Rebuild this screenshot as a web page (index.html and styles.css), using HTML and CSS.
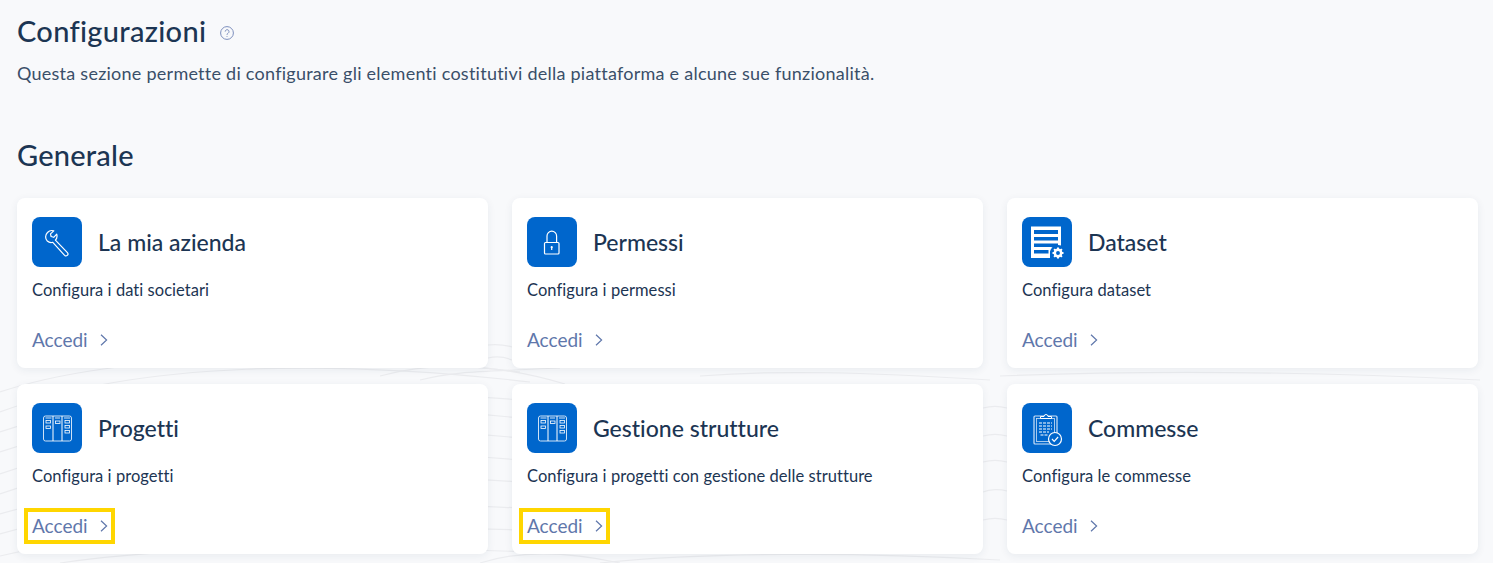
FILE: index.html
```html
<!DOCTYPE html>
<html lang="it">
<head>
  <meta charset="UTF-8" />
  <title>Configurazioni</title>
  <link rel="stylesheet" href="styles.css">
</head>
<body>
  <svg class="sfondo" width="1493" height="563" viewBox="0 0 1493 563" fill="none" aria-hidden="true">
    <g stroke="#ebecef" stroke-width="1.2">
      <path d="M0 392 C120 352 330 350 520 372" />
      <path d="M0 412 C140 360 340 360 530 382" />
      <path d="M0 432 C150 380 340 385 520 400" />
      <path d="M0 452 C150 400 340 400 520 418" />
      <path d="M0 474 C150 420 340 420 520 438" />
      <path d="M0 494 C150 440 340 445 520 460" />
      <path d="M0 514 C150 470 340 470 520 482" />
      <path d="M0 534 C150 490 340 500 520 508" />
      <path d="M0 556 C150 520 340 525 520 530" />
      <path d="M60 563 C180 545 350 545 530 552" />
      <path d="M380 376 C430 362 490 362 565 384" />
      <path d="M420 380 C450 372 470 372 560 368" />
      <path d="M488 345 C496 344 505 345 512 347" />
      <path d="M488 358 C496 356 505 357 512 360" />
      <path d="M480 563 C520 550 570 552 620 563" />
      <path d="M983 408 C990 406 1000 406 1007 408" />
      <path d="M983 436 C990 434 1000 434 1007 436" />
      <path d="M983 462 C990 460 1000 460 1007 462" />
      <path d="M983 492 C990 489 1000 489 1007 491" />
      <path d="M983 520 C990 518 1000 518 1007 520" />
      <path d="M700 376 C780 370 860 372 990 380" />
      <path d="M1000 376 C1150 370 1320 372 1480 380" />
      <path d="M600 563 C700 552 860 552 1000 560" />
    </g>
  </svg>

  <main class="pagina">
    <header class="intestazione">
      <h1>Configurazioni
        <svg class="aiuto" width="14" height="14" viewBox="0 0 14 14" fill="none" stroke="#7d8fbd">
          <circle cx="7" cy="7" r="6.4" />
          <path d="M5.2 5.6a1.900 1.900 0 1 1 2.900 1.600c-.7.4-1.100.8-1.100 1.600" />
          <path d="M7 10v.8" />
        </svg>
      </h1>
      <p>Questa sezione permette di configurare gli elementi costitutivi della piattaforma e alcune sue funzionalità.</p>
    </header>

    <h2>Generale</h2>

    <section class="griglia">
      <article class="card">
        <div class="card-top">
          <span class="icona">
            <svg width="50" height="50" viewBox="0 0 50 50" fill="none" stroke="#fff" stroke-width="1.2" stroke-linejoin="round">
              <path d="M15.500 15.500c1.600-1.700 4-2.400 6.300-1.600l-3.300 3 .6 2.600 2.600.8 3-3.200c.7 2.200.2 4.400-1.300 6l12 12.500c.8.900.8 2-.1 2.800-.8.700-1.900.7-2.700-.1L20.800 25.300c-1.900.6-4 .1-5.500-1.300-2.300-2.300-2.200-6.100.2-8.500z" />
            </svg>
          </span>
          <h3>La mia azienda</h3>
        </div>
        <p class="descr">Configura i dati societari</p>
        <a class="accedi" href="#">Accedi <svg class="freccia" width="8" height="12" viewBox="0 0 8 12" fill="none" stroke="#5f77ab" stroke-width="1.2"><path d="M1 .8 6.600 6 1 11.200" /></svg></a>
      </article>

      <article class="card">
        <div class="card-top">
          <span class="icona">
            <svg width="50" height="50" viewBox="0 0 50 50" fill="none" stroke="#fff" stroke-width="1.2">
              <rect x="17.500" y="25.500" width="14.500" height="11.500" rx="1" />
              <path d="M20 25.500v-6.500a4.800 4.800 0 0 1 9.600 0v6.500" />
              <circle cx="24.700" cy="30.200" r="1.100" fill="#fff" stroke="none" />
              <path d="M24.700 30.500v2.500" />
            </svg>
          </span>
          <h3>Permessi</h3>
        </div>
        <p class="descr">Configura i permessi</p>
        <a class="accedi" href="#">Accedi <svg class="freccia" width="8" height="12" viewBox="0 0 8 12" fill="none" stroke="#5f77ab" stroke-width="1.2"><path d="M1 .8 6.600 6 1 11.200" /></svg></a>
      </article>

      <article class="card">
        <div class="card-top">
          <span class="icona">
            <svg width="50" height="50" viewBox="0 0 50 50" fill="none">
              <path d="M9 9.500h30v21.500h-7.500l-3.500 3.500v6.500H9z" fill="#fff" />
              <path d="M12 13h24v4H12zM12 20h24v3.500H12zM12 26.500h24v3.500H12zM12 33h14.500v3.500H12z" fill="#0066cc" />
              <circle cx="36" cy="36" r="8" fill="#0066cc" />
              <circle cx="36" cy="36" r="3.200" stroke="#fff" stroke-width="2.500" />
              <path d="M36 30.500v2M36 39.500v2M30.500 36h2M39.500 36h2M32.100 32.100l1.400 1.400M38.500 38.500l1.400 1.400M32.100 39.900l1.400-1.400M38.500 33.500l1.400-1.400" stroke="#fff" stroke-width="2" />
            </svg>
          </span>
          <h3>Dataset</h3>
        </div>
        <p class="descr">Configura dataset</p>
        <a class="accedi" href="#">Accedi <svg class="freccia" width="8" height="12" viewBox="0 0 8 12" fill="none" stroke="#5f77ab" stroke-width="1.2"><path d="M1 .8 6.600 6 1 11.200" /></svg></a>
      </article>

      <article class="card">
        <div class="card-top">
          <span class="icona">
            <svg width="50" height="50" viewBox="0 0 50 50" fill="none" stroke="#fff">
              <rect x="11.500" y="13" width="28" height="25" rx="2" stroke="#cfe2f6" />
              <path d="M21 13v25M30 13v25" stroke-width="1" stroke="#fff" />
              <path d="M13.500 15h6M23 15h5M32 15h6" stroke="#cfe2f6" />
              <rect x="14" y="17.500" width="4.500" height="2.500" stroke-width=".8" />
              <rect x="14" y="23" width="4.500" height="2.500" stroke-width=".8" />
              <rect x="23.500" y="18" width="4.500" height="2.500" stroke-width=".8" />
              <rect x="33" y="17.500" width="4.500" height="2.500" stroke-width=".8" />
              <rect x="33" y="22.500" width="4.500" height="2.500" stroke-width=".8" />
              <rect x="33" y="27.500" width="4.500" height="2.500" stroke-width=".8" />
            </svg>
          </span>
          <h3>Progetti</h3>
        </div>
        <p class="descr">Configura i progetti</p>
        <a class="accedi evidenziato" href="#">Accedi <svg class="freccia" width="8" height="12" viewBox="0 0 8 12" fill="none" stroke="#5f77ab" stroke-width="1.2"><path d="M1 .8 6.600 6 1 11.200" /></svg></a>
      </article>

      <article class="card">
        <div class="card-top">
          <span class="icona">
            <svg width="50" height="50" viewBox="0 0 50 50" fill="none" stroke="#fff">
              <rect x="11.500" y="13" width="28" height="25" rx="2" stroke="#cfe2f6" />
              <path d="M21 13v25M30 13v25" stroke-width="1" stroke="#fff" />
              <path d="M13.500 15h6M23 15h5M32 15h6" stroke="#cfe2f6" />
              <rect x="14" y="17.500" width="4.500" height="2.500" stroke-width=".8" />
              <rect x="14" y="23" width="4.500" height="2.500" stroke-width=".8" />
              <rect x="23.500" y="18" width="4.500" height="2.500" stroke-width=".8" />
              <rect x="33" y="17.500" width="4.500" height="2.500" stroke-width=".8" />
              <rect x="33" y="22.500" width="4.500" height="2.500" stroke-width=".8" />
              <rect x="33" y="27.500" width="4.500" height="2.500" stroke-width=".8" />
            </svg>
          </span>
          <h3>Gestione strutture</h3>
        </div>
        <p class="descr">Configura i progetti con gestione delle strutture</p>
        <a class="accedi evidenziato" href="#">Accedi <svg class="freccia" width="8" height="12" viewBox="0 0 8 12" fill="none" stroke="#5f77ab" stroke-width="1.2"><path d="M1 .8 6.600 6 1 11.200" /></svg></a>
      </article>

      <article class="card">
        <div class="card-top">
          <span class="icona">
            <svg width="50" height="50" viewBox="0 0 50 50" fill="none" stroke="#fff">
              <rect x="12" y="13" width="23" height="28" rx="1" stroke="#cfe2f6" stroke-width="1.200" />
              <rect x="14.500" y="15.500" width="18" height="23" stroke="#cfe2f6" stroke-width=".8" />
              <path d="M18.500 15.500v-2H22a2 2 0 0 1 4 0h3.500v2z" fill="#0066cc" stroke-width="1" />
              <path d="M17 20h13M17 23h13M17 26h13M17 29h10M18.500 32h7" stroke-width="1.200" stroke-dasharray="3 1" />
              <circle cx="33" cy="36" r="6.500" fill="#0066cc" stroke-width="1.200" />
              <path d="M30 36l2.200 2.300 3.900-4.300" stroke-width="1.200" />
            </svg>
          </span>
          <h3>Commesse</h3>
        </div>
        <p class="descr">Configura le commesse</p>
        <a class="accedi" href="#">Accedi <svg class="freccia" width="8" height="12" viewBox="0 0 8 12" fill="none" stroke="#5f77ab" stroke-width="1.2"><path d="M1 .8 6.600 6 1 11.200" /></svg></a>
      </article>
    </section>
  </main>
</body>
</html>
```

FILE: styles.css
```css
:root {
  --blu-scuro: #1c3553;
  --blu-icona: #0066cc;
  --link: #5f77ab;
  --sfondo: #f8f9fb;
}

* {
  box-sizing: border-box;
}

html,
body {
  height: 563px;
  overflow: hidden;
}

body {
  margin: 0;
  background-color: var(--sfondo);
  color: var(--blu-scuro);
  font-family: 'Lato', sans-serif;
  font-variant-ligatures: none;
}

.sfondo {
  position: absolute;
  top: 0;
  left: 0;
}

.pagina {
  position: relative;
  padding: 13px 14px 0 17px;
}

h1 {
  display: flex;
  align-items: center;
  gap: 14px;
  margin: 0;
  font-size: 29px;
  line-height: 36px;
  font-weight: 500;
  letter-spacing: 0.3px;
}

.aiuto {
  margin-top: 3px;
}

.intestazione p {
  margin: 13px 0 0;
  font-size: 18px;
  line-height: 22px;
  letter-spacing: 0.25px;
  color: #3a4f69;
}

h2 {
  margin: 53px 0 0;
  font-size: 29px;
  line-height: 36px;
  font-weight: 500;
  letter-spacing: 0.2px;
}

.griglia {
  display: grid;
  grid-template-columns: repeat(3, 471.3px);
  grid-auto-rows: 170px;
  column-gap: 23.7px;
  row-gap: 16px;
  margin-top: 25px;
}

.card {
  display: flex;
  flex-direction: column;
  padding: 19px 15px 0;
  background-color: #fff;
  border-radius: 8px;
  box-shadow: 0 2px 8px rgba(30, 50, 80, 0.07);
}

.card-top {
  display: flex;
  align-items: center;
  gap: 16px;
}

.icona {
  display: block;
  width: 50px;
  height: 50px;
  border-radius: 8px;
  background-color: var(--blu-icona);
}

.icona svg {
  display: block;
}

h3 {
  margin: 0;
  font-size: 23px;
  font-weight: 500;
}

.descr {
  margin: 12px 0 0;
  font-size: 16.5px;
  line-height: 22px;
  letter-spacing: 0.05px;
}

.accedi {
  display: flex;
  align-items: center;
  gap: 12px;
  width: max-content;
  margin: 25px 0 0 -4px;
  padding: 0 3px 0 4px;
  font-size: 19px;
  line-height: 28px;
  color: var(--link);
  text-decoration: none;
}

.evidenziato {
  outline: 4px solid #ffd600;
}
```
